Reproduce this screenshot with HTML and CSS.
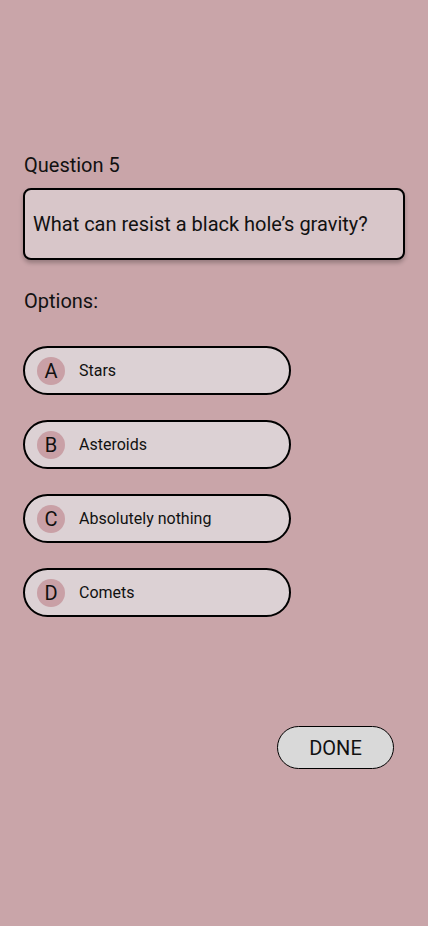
FILE: index.html
```html
<!DOCTYPE html>
<html>
<head>
<meta charset="utf-8">
<link rel="stylesheet" href="styles.css">
</head>
<body>
<main class="screen">
  <div class="label">Question 5</div>
  <div class="question">What can resist a black hole’s gravity?</div>
  <div class="label options-label">Options:</div>
  <ul class="options">
    <li class="option"><span class="letter">A</span><span class="text">Stars</span></li>
    <li class="option"><span class="letter">B</span><span class="text">Asteroids</span></li>
    <li class="option"><span class="letter">C</span><span class="text">Absolutely nothing</span></li>
    <li class="option"><span class="letter">D</span><span class="text">Comets</span></li>
  </ul>
  <div class="actions"><button class="done">DONE</button></div>
</main>
</body>
</html>
```
FILE: styles.css
```css
html, body {
  margin: 0;
  padding: 0;
}
body {
  background: #c9a5a9;
  font-family: Roboto, "Noto Sans", sans-serif;
  color: #111;
  width: 428px;
  height: 926px;
  overflow: hidden;
}
.screen {
  padding: 153px 23px 0 23px;
  display: flex;
  flex-direction: column;
}
.label {
  font-size: 20px;
  line-height: 24px;
  padding-left: 1px;
}
.question {
  margin-top: 11px;
  height: 68px;
  box-sizing: content-box;
  border: 2px solid #000;
  border-radius: 8px;
  background: #d8c6c9;
  box-shadow: 0 3px 4px rgba(0,0,0,0.25);
  display: flex;
  align-items: center;
  padding: 0 8px;
  font-size: 20px;
  width: 362px;
}
.options-label {
  margin-top: 29px;
}
.options {
  list-style: none;
  margin: 33px 0 0 0;
  padding: 0;
  display: flex;
  flex-direction: column;
  gap: 25px;
}
.option {
  box-sizing: border-box;
  width: 268px;
  height: 49px;
  border: 2px solid #000;
  border-radius: 25px;
  background: #dcd1d4;
  display: flex;
  align-items: center;
  padding-left: 12px;
}
.letter {
  width: 28px;
  height: 28px;
  border-radius: 50%;
  background: #c9a0a6;
  display: flex;
  align-items: center;
  justify-content: center;
  font-size: 20px;
}
.text {
  margin-left: 14px;
  font-size: 16px;
}
.actions {
  display: flex;
  justify-content: flex-end;
  margin-top: 109px;
  padding-right: 11px;
}
.done {
  width: 117px;
  height: 43px;
  border: 1px solid #000;
  border-radius: 22px;
  background: #d9d9d9;
  font-family: Roboto, "Noto Sans", sans-serif;
  font-size: 20px;
  color: #111;
  padding: 0;
}
```
